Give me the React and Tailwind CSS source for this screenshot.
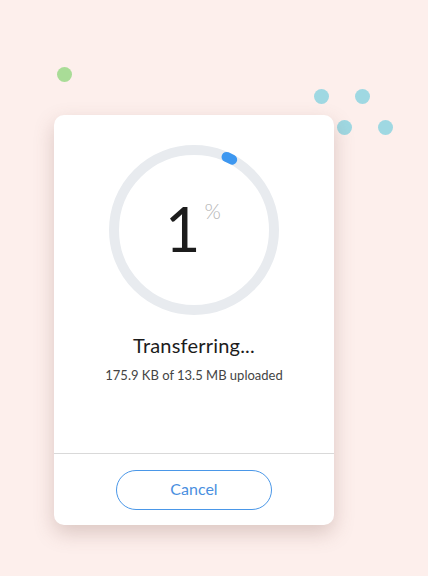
import React from "react";

const Ring = () => {
  const r = 80;
  const cx = 85;
  const cy = 85;
  const toXY = (deg) => {
    const a = ((deg - 90) * Math.PI) / 180;
    return [cx + r * Math.cos(a), cy + r * Math.sin(a)];
  };
  const [x1, y1] = toXY(24);
  const [x2, y2] = toXY(28.5);
  return (
    <svg width="170" height="170" viewBox="0 0 170 170" className="absolute inset-0">
      <circle cx={cx} cy={cy} r={r} fill="none" stroke="#e8ebef" strokeWidth="10" />
      <path
        d={`M ${x1} ${y1} A ${r} ${r} 0 0 1 ${x2} ${y2}`}
        fill="none"
        stroke="#3d97f0"
        strokeWidth="10"
        strokeLinecap="round"
      />
    </svg>
  );
};

export default function App() {
  return (
    <div
      className="relative w-[428px] h-[576px] bg-[#fdefec] overflow-hidden"
      style={{ fontFamily: "Lato, 'Open Sans', sans-serif" }}
    >
      {/* decorative dots */}
      <span className="absolute left-[57px] top-[67px] w-[15px] h-[15px] rounded-full bg-[#a9dc97]" />
      <span className="absolute left-[314px] top-[89px] w-[15px] h-[15px] rounded-full bg-[#9fd8e2]" />
      <span className="absolute left-[355px] top-[89px] w-[15px] h-[15px] rounded-full bg-[#9fd8e2]" />
      <span className="absolute left-[337px] top-[120px] w-[15px] h-[15px] rounded-full bg-[#9fd8e2]" />
      <span className="absolute left-[378px] top-[120px] w-[15px] h-[15px] rounded-full bg-[#9fd8e2]" />

      <div className="pt-[115px] pl-[54px]">
        <div className="relative w-[280px] h-[410px] bg-white rounded-[10px] shadow-[0_8px_20px_rgba(120,80,70,0.25)] flex flex-col">
          <div className="flex-1 flex flex-col items-center pt-[30px]">
            <div className="relative w-[170px] h-[170px]">
              <Ring />
              <div className="absolute inset-0 flex items-center justify-center">
                <div className="flex items-start ml-[-2px] mt-[-4px]">
                  <span className="text-[61px] leading-none font-normal text-[#1c1c1c]">1</span>
                  <span className="ml-[4px] mt-[2px] text-[21px] leading-none font-light text-[#b5b5b5]">%</span>
                </div>
              </div>
            </div>
            <div className="mt-[20px] text-[20px] leading-none text-[#1c1c1c] tracking-[0.2px]">
              Transferring...
            </div>
            <div className="mt-[14px] text-[13px] leading-none text-[#444]">
              175.9 KB of 13.5 MB uploaded
            </div>
          </div>
          <div className="h-[72px] border-t border-[#d9d9d9] flex items-center justify-center">
            <button className="w-[156px] h-[40px] rounded-full border border-[#4a97e8] text-[#4a8fe0] text-[16px] pb-[2px]">
              Cancel
            </button>
          </div>
        </div>
      </div>
    </div>
  );
}
